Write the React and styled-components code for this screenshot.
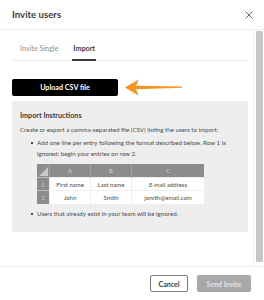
import React from "react";
import styled, { createGlobalStyle } from "styled-components";

const Global = createGlobalStyle`
    html, body {
        margin: 0;
        padding: 0;
        background: #ffffff;
    }
    body {
        font-family: 'Lato', 'Noto Sans', sans-serif;
        color: #3c3c3c;
    }
`;

const Modal = styled.div`
    width: 264px;
    height: 300px;
    display: flex;
    flex-direction: column;
    background: #ffffff;
    overflow: hidden;
`;

const Header = styled.div`
    height: 29px;
    flex: none;
    display: flex;
    align-items: center;
    justify-content: space-between;
    padding: 0 12px;
    border-bottom: 1px solid #ececec;
`;

const Title = styled.h1`
    margin: 0;
    font-size: 9.6px;
    font-weight: 700;
    color: #3c3c3c;
`;

const Close = styled.button`
    border: none;
    background: none;
    padding: 0;
    width: 9px;
    height: 9px;
    display: flex;
    align-items: center;
    justify-content: center;
    margin-right: -1px;
`;

const BodyRow = styled.div`
    flex: 1;
    min-height: 0;
    display: flex;
`;

const Body = styled.div`
    flex: 1;
    overflow: hidden;
    padding: 0 5px 0 12px;
`;

// scrollbar rail beside the scrolling body
const Rail = styled.div`
    width: 7px;
    flex: none;
    border-left: 1px solid #f0f0f0;
    padding: 1px 1px 4px 2px;
    display: flex;
`;

const Thumb = styled.div`
    flex: 1;
    background: #c6c6c6;
    border-radius: 1px;
`;

const TabList = styled.div`
    display: flex;
    gap: 13px;
    padding-left: 7px;
    border-bottom: 1px solid #ebebeb;
`;

const Tab = styled.div`
    padding: 14px 1px 6px;
    font-size: 7.2px;
    font-weight: ${p => (p.$active ? 700 : 400)};
    color: ${p => (p.$active ? "#3c3c3c" : "#8f8f8f")};
    border-bottom: 2px solid ${p => (p.$active ? "#3c3c3c" : "transparent")};
    margin-bottom: -1px;
`;

const UploadRow = styled.div`
    display: flex;
    align-items: center;
    gap: 7px;
    margin-top: 18px;
`;

const UploadButton = styled.button`
    width: 106px;
    height: 17px;
    border: none;
    border-radius: 2px;
    background: #000000;
    color: #ffffff;
    font-family: 'Lato', sans-serif;
    font-size: 7.2px;
    font-weight: 700;
    padding: 0;
`;

const Panel = styled.div`
    margin-top: 5px;
    background: #eeeeee;
    padding: 10px 8px 13px;
    font-size: 6.2px;
    color: #4a4a4a;
`;

const PanelTitle = styled.div`
    font-size: 7.2px;
    font-weight: 700;
    color: #3c3c3c;
    line-height: 10px;
`;

const Text = styled.p`
    margin: 4px 0 0;
    line-height: 10px;
`;

const List = styled.ul`
    margin: 2px 0 0;
    padding-left: 17px;
    list-style: none;
`;

const Item = styled.li`
    position: relative;
    line-height: 11px;

    &::before {
        content: "";
        position: absolute;
        left: -6px;
        top: 5px;
        width: 2px;
        height: 2px;
        background: #4a4a4a;
    }
`;

const Table = styled.table`
    border-collapse: collapse;
    margin: 5px 0 4px;
    font-size: 6px;
`;

const Th = styled.th`
    background: #8c8c8c;
    color: #d6d6d6;
    font-weight: 400;
    height: 13px;
    padding: 0;
    width: ${p => p.$w}px;
    border-left: 1px solid #a3a3a3;
`;

const Corner = styled.th`
    background: #8c8c8c;
    width: 12px;
    height: 13px;
    padding: 0;
    position: relative;
`;

const Tri = styled.div`
    position: absolute;
    right: 1px;
    bottom: 1px;
    width: 0;
    height: 0;
    border-left: 9px solid transparent;
    border-bottom: 9px solid #c9c9c9;
`;

const RowNum = styled.td`
    background: #8c8c8c;
    color: #cfcfcf;
    text-align: center;
    padding: 0;
    border-top: 1px solid #bdbdbd;
`;

const Td = styled.td`
    background: #ffffff;
    color: #4a4a4a;
    text-align: center;
    padding: 0;
    height: ${p => p.$h || 12}px;
    border-top: 1px solid #eeeeee;
    border-left: 1px solid #eeeeee;
`;

const Footer = styled.div`
    height: 33px;
    flex: none;
    border-top: 1px solid #ececec;
    display: flex;
    align-items: center;
    justify-content: flex-end;
    gap: 9px;
    padding: 0 13px 0 0;
`;

const Button = styled.button`
    height: 17px;
    width: ${p => p.$w}px;
    border-radius: 2px;
    font-family: 'Lato', sans-serif;
    font-size: 7px;
    font-weight: 700;
    padding: 0;
    border: 1px solid ${p => (p.$primary ? "#a8a8a8" : "#7a7a7a")};
    background: ${p => (p.$primary ? "#a8a8a8" : "#ffffff")};
    color: ${p => (p.$primary ? "#e4e4e4" : "#3c3c3c")};
`;

const Arrow = () => (
    <svg width="58" height="17" viewBox="0 0 58 17">
        <path
            d="M0 8.5 L13.5 0.5 L11 6.8 L57 7.6 L57 8.8 L11 10.2 L13.5 16.5 Z"
            fill="#f7931e"
        />
    </svg>
);

const App = () => {
    return (
        <>
            <Global />
            <Modal>
                <Header>
                    <Title>Invite users</Title>
                    <Close aria-label="Close">
                        <svg width="8" height="8" viewBox="0 0 8 8">
                            <path d="M0.5 0.5 L7.5 7.5 M7.5 0.5 L0.5 7.5" stroke="#5a5a5a" strokeWidth="0.9" />
                        </svg>
                    </Close>
                </Header>
                <BodyRow>
                    <Body>
                        <TabList>
                            <Tab>Invite Single</Tab>
                            <Tab $active>Import</Tab>
                        </TabList>
                        <UploadRow>
                            <UploadButton>Upload CSV file</UploadButton>
                            <Arrow />
                        </UploadRow>
                        <Panel>
                            <PanelTitle>Import Instructions</PanelTitle>
                            <Text>Create or export a comma-separated file (CSV) listing the users to import:</Text>
                            <List>
                                <Item>
                                    Add one line per entry following the format described below. Row 1 is ignored; begin your entries on row 2.
                                    <Table>
                                        <thead>
                                            <tr>
                                                <Corner><Tri /></Corner>
                                                <Th $w={40}>A</Th>
                                                <Th $w={40}>B</Th>
                                                <Th $w={72}>C</Th>
                                            </tr>
                                        </thead>
                                        <tbody>
                                            <tr>
                                                <RowNum>1</RowNum>
                                                <Td>First name</Td>
                                                <Td>Last name</Td>
                                                <Td>E-mail address</Td>
                                            </tr>
                                            <tr>
                                                <RowNum>2</RowNum>
                                                <Td $h={13}>John</Td>
                                                <Td $h={13}>Smith</Td>
                                                <Td $h={13}>jsmith@email.com</Td>
                                            </tr>
                                        </tbody>
                                    </Table>
                                </Item>
                                <Item>Users that already exist in your team will be ignored.</Item>
                            </List>
                        </Panel>
                    </Body>
                    <Rail>
                        <Thumb />
                    </Rail>
                </BodyRow>
                <Footer>
                    <Button $w={38}>Cancel</Button>
                    <Button $w={54} $primary>Send Invite</Button>
                </Footer>
            </Modal>
        </>
    );
};

export default App;
